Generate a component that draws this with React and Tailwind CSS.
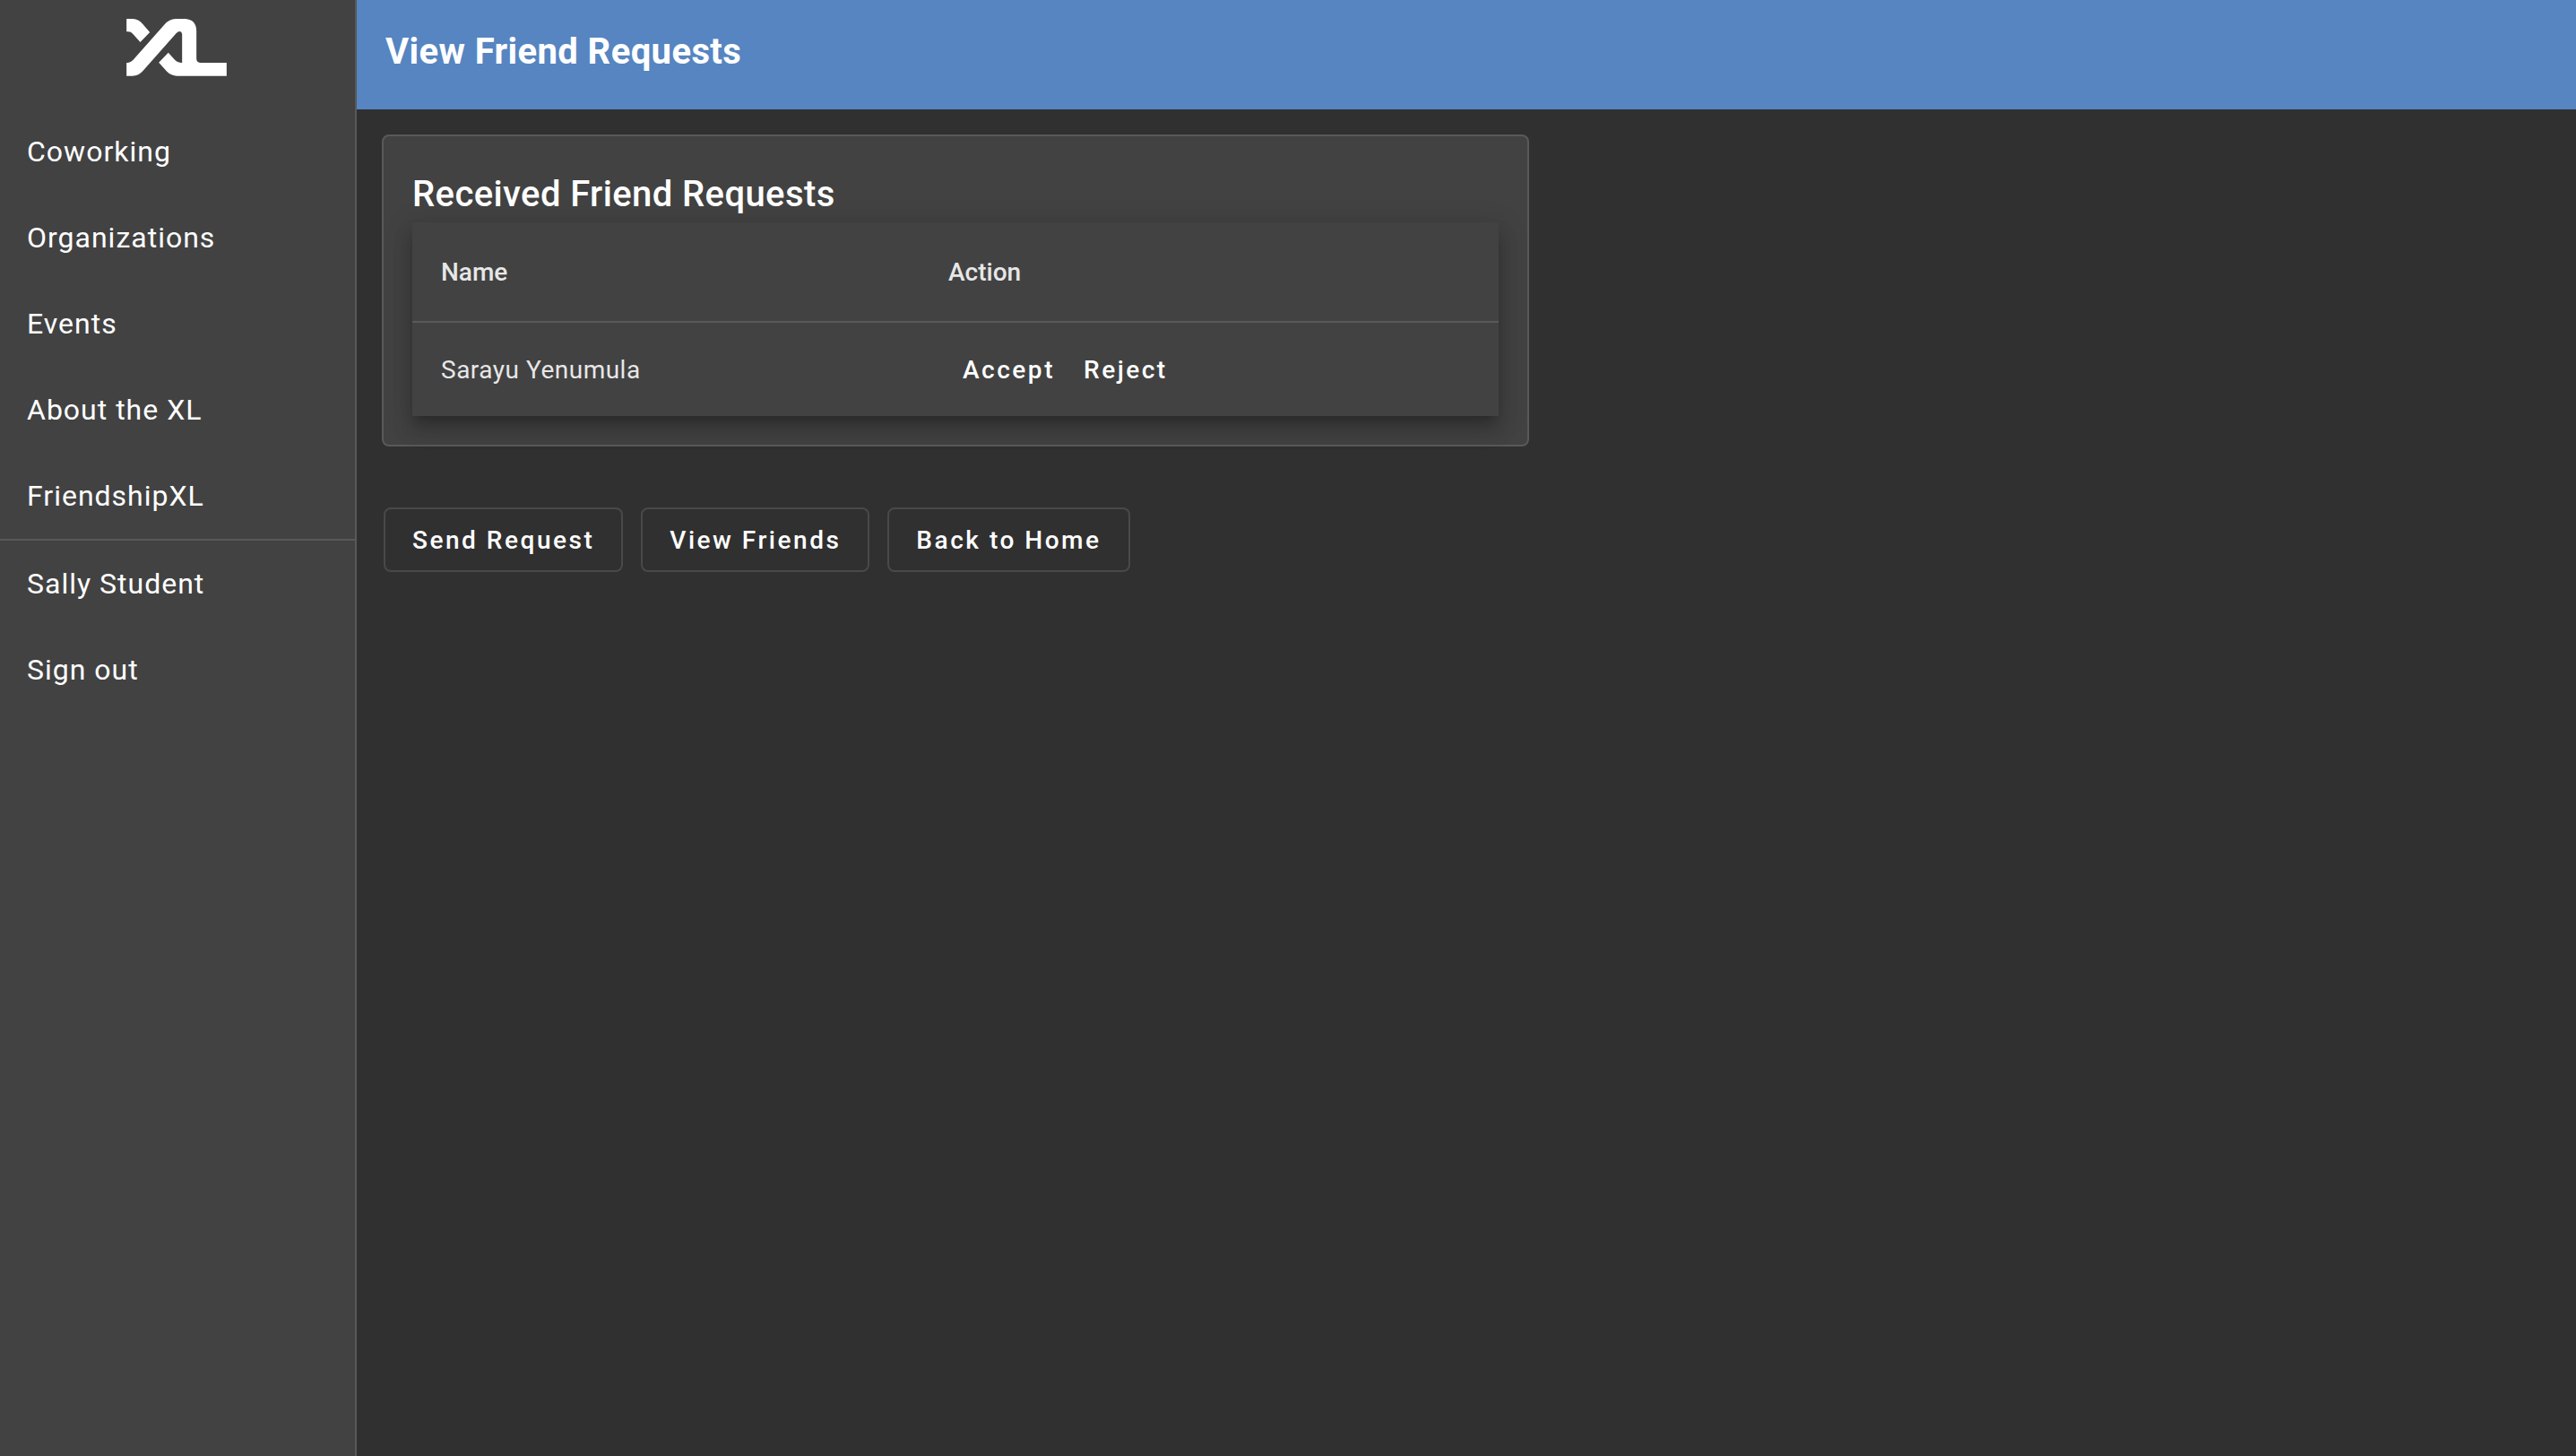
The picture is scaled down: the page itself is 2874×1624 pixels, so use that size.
const primaryLinks = ['Coworking', 'Organizations', 'Events', 'About the XL', 'FriendshipXL'];
const accountLinks = ['Sally Student', 'Sign out'];
const requests = [{ id: 1, name: 'Sarayu Yenumula' }];
const pageActions = ['Send Request', 'View Friends', 'Back to Home'];

function Logo() {
  return (
    <svg viewBox="63 63 335 192" className="h-16 w-28" fill="#fff" role="img" aria-label="XL">
      <path d="M63 63H84Q103 64 117 80L141 108L109 141L84 113Q78 106 68 106H63Z" />
      <path d="M63 210H68Q77 209 84 202L189 83Q206 63 228 63H260Q296 66 297 103V197Q298 208 309 210H398V254H232Q212 253 198 239L171 209L203 176L226 202Q234 210 245 210H249V114Q247 105 240 105Q234 106 229 112L118 237Q104 254 83 254H63Z" />
    </svg>
  );
}

function NavList({ items }) {
  return (
    <ul>
      {items.map((item) => (
        <li key={item}>
          <a href="#" className="flex h-24 items-center px-[30px] text-[32px] leading-[48px] tracking-[1px]">
            {item}
          </a>
        </li>
      ))}
    </ul>
  );
}

function Sidebar() {
  return (
    <aside className="w-[398px] shrink-0 border-r-2 border-white/12 bg-[#424242]">
      <div className="flex h-[121px] px-[141px] pt-[21px]">
        <Logo />
      </div>
      <nav>
        <NavList items={primaryLinks} />
        <hr className="border-t-2 border-white/12" />
        <NavList items={accountLinks} />
      </nav>
    </aside>
  );
}

function RequestsTable() {
  return (
    <table className="w-full table-fixed border-separate border-spacing-0 bg-[#424242] text-left text-[28px] leading-10 text-[#e7e7e7] shadow-[0_10px_10px_-6px_rgba(0,0,0,0.2),0_16px_20px_2px_rgba(0,0,0,0.14),0_6px_28px_4px_rgba(0,0,0,0.12)]">
      <thead>
        <tr className="h-28">
          <th className="w-[566px] border-b-2 border-white/12 px-8 pt-0.5 font-medium">Name</th>
          <th className="border-b-2 border-white/12 px-8 pt-0.5 font-medium">Action</th>
        </tr>
      </thead>
      <tbody>
        {requests.map((request) => (
          <tr key={request.id} className="h-[104px]">
            <td className="px-8 pt-0.5 tracking-[0.5px]">{request.name}</td>
            <td className="px-8 pt-0.5">
              <div className="flex font-medium tracking-[0.09em] text-white">
                <button type="button" className="h-[72px] px-4">Accept</button>
                <button type="button" className="h-[72px] px-4">Reject</button>
              </div>
            </td>
          </tr>
        ))}
      </tbody>
    </table>
  );
}

export default function App() {
  return (
    <div className="flex min-h-screen bg-[#303030] font-[Roboto,sans-serif] text-white">
      <Sidebar />
      <div className="min-w-0 flex-1">
        <header className="bg-[#5685c1] px-8 pt-[26px] pb-8">
          <h1 className="text-[40px] leading-[64px] font-bold tracking-[0.01em]">View Friend Requests</h1>
        </header>
        <main className="p-7">
          <section className="max-w-[1280px] rounded-lg border-2 border-[#595959] bg-[#424242] px-8 pt-[34px] pb-8">
            <h2 className="text-[40px] leading-[62px] font-medium tracking-[0.01em]">Received Friend Requests</h2>
            <RequestsTable />
          </section>
          <div className="mt-[68px] ml-0.5 flex flex-wrap gap-5">
            {pageActions.map((label) => (
              <button
                key={label}
                type="button"
                className="h-[72px] rounded-lg border-2 border-white/12 px-[30px] pt-0.5 text-[28px] font-medium tracking-[0.09em]"
              >
                {label}
              </button>
            ))}
          </div>
        </main>
      </div>
    </div>
  );
}
